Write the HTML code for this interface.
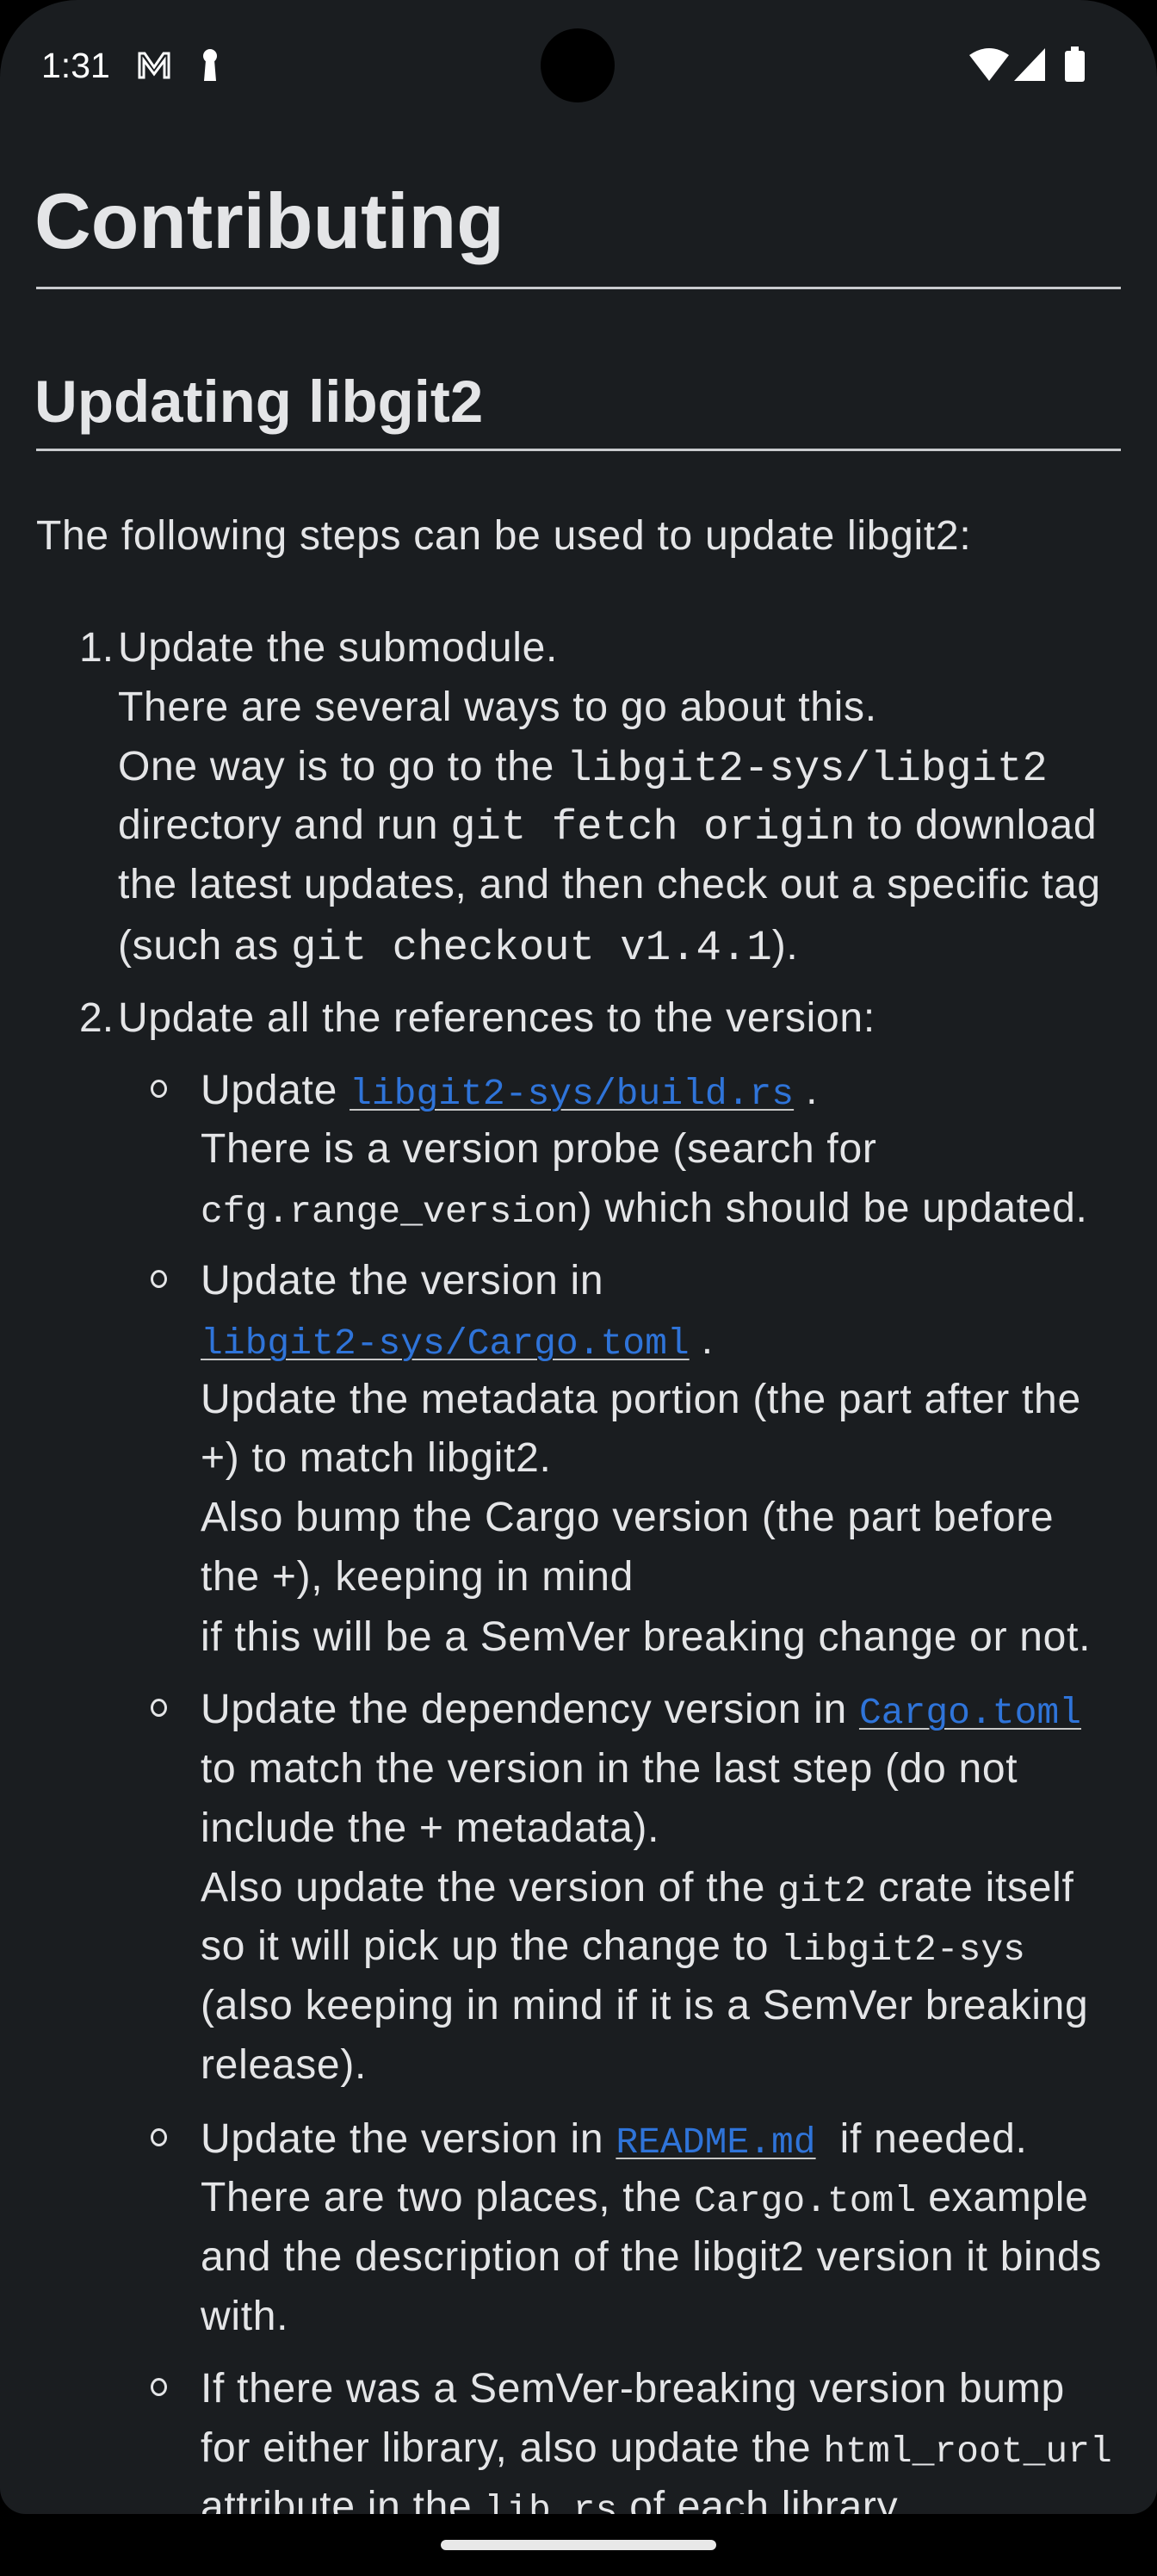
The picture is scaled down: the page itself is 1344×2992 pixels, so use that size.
<!DOCTYPE html>
<html><head><meta charset="utf-8"><style>
html,body{margin:0;padding:0;background:#000;}
#s{position:relative;width:1344px;height:2992px;overflow:hidden;background:#000;}
#scr{position:absolute;left:0;top:0;width:1344px;height:2920px;background:#1a1d20;border-radius:90px 90px 30px 30px;overflow:hidden;}
#in{position:absolute;left:0;top:4px;width:1344px;height:2920px;}
.l{position:absolute;white-space:pre;font-family:"Liberation Sans",sans-serif;font-size:48px;letter-spacing:0.7px;line-height:69px;color:#e4e5e7;}
.c{font-family:"Liberation Mono",monospace;font-size:43px;letter-spacing:0;}
.cb{font-family:"Liberation Mono",monospace;font-size:49px;letter-spacing:0;}
.a{font-family:"Liberation Mono",monospace;font-size:43px;letter-spacing:0;color:#2f74d9;text-decoration:underline;text-decoration-color:#c8c8c8;text-underline-offset:6px;text-decoration-thickness:2px;}
.b{position:absolute;left:175px;width:13px;height:15px;border:3px solid #e4e5e7;border-radius:50%;}
.hr{position:absolute;left:42px;width:1260px;height:3px;background:#c9cbce;}
</style></head><body><div id="s"><div id="scr">
<div style="position:absolute;left:48px;top:50px;font-family:'Liberation Sans',sans-serif;font-size:41px;color:#fff;line-height:52px;">1:31</div>
<svg style="position:absolute;left:158px;top:58px" width="42" height="36" viewBox="0 0 42 36"><path d="M4 32V4h6l11 16 11-16h6v28h-5V12L21 28 9 12v20z" fill="none" stroke="#fff" stroke-width="3"/></svg>
<svg style="position:absolute;left:232px;top:56px" width="24" height="40" viewBox="0 0 24 40"><circle cx="12" cy="9" r="8" fill="#fff"/><path d="M7 14h10l2 24H5z" fill="#fff"/></svg>
<div style="position:absolute;left:628px;top:33px;width:86px;height:86px;border-radius:50%;background:#000"></div>
<svg style="position:absolute;left:1126px;top:56px" width="46" height="38" viewBox="0 0 46 38"><path d="M0 8Q23-8 46 8L23 38z" fill="#fff"/></svg>
<svg style="position:absolute;left:1178px;top:56px" width="36" height="38" viewBox="0 0 36 38"><path d="M36 0V38H0z" fill="#fff"/></svg>
<div style="position:absolute;left:1237px;top:59px;width:23px;height:36px;background:#fff;border-radius:3px"></div>
<div style="position:absolute;left:1244px;top:54px;width:9px;height:6px;background:#fff"></div>

<div class="l" style="left:40px;top:198px;font-size:91px;letter-spacing:0;line-height:120px;font-weight:bold;">Contributing</div>
<div class="hr" style="top:333px"></div>
<div class="l" style="left:40px;top:422px;font-size:69px;letter-spacing:0;line-height:90px;font-weight:bold;">Updating libgit2</div>
<div class="hr" style="top:521px"></div>
<div id="in">
<div class="l" style="left:42px;top:584px">The following steps can be used to update libgit2:</div>

<div class="l" style="left:92px;top:714px;letter-spacing:0">1.</div>
<div class="l" style="left:137px;top:714px">Update the submodule.</div>
<div class="l" style="left:137px;top:783px">There are several ways to go about this.</div>
<div class="l" style="left:137px;top:852px">One way is to go to the <span class="cb">libgit2-sys/libgit2</span></div>
<div class="l" style="left:137px;top:920px">directory and run <span class="cb">git fetch origin</span> to download</div>
<div class="l" style="left:137px;top:989px">the latest updates, and then check out a specific tag</div>
<div class="l" style="left:137px;top:1060px">(such as <span class="cb">git checkout v1.4.1</span>).</div>
<div class="l" style="left:92px;top:1144px;letter-spacing:0">2.</div>
<div class="l" style="left:137px;top:1144px">Update all the references to the version:</div>

<div class="b" style="top:1250px"></div>
<div class="l" style="left:233px;top:1228px">Update <span class="a">libgit2-sys/build.rs</span> .</div>
<div class="l" style="left:233px;top:1296px">There is a version probe (search for</div>
<div class="l" style="left:233px;top:1365px"><span class="c">cfg.range_version</span>) which should be updated.</div>

<div class="b" style="top:1471px"></div>
<div class="l" style="left:233px;top:1449px">Update the version in</div>
<div class="l" style="left:233px;top:1518px"><span class="a">libgit2-sys/Cargo.toml</span> .</div>
<div class="l" style="left:233px;top:1587px">Update the metadata portion (the part after the</div>
<div class="l" style="left:233px;top:1655px">+) to match libgit2.</div>
<div class="l" style="left:233px;top:1724px">Also bump the Cargo version (the part before</div>
<div class="l" style="left:233px;top:1793px">the +), keeping in mind</div>
<div class="l" style="left:233px;top:1863px">if this will be a SemVer breaking change or not.</div>

<div class="b" style="top:1969px"></div>
<div class="l" style="left:233px;top:1947px">Update the dependency version in <span class="a">Cargo.toml</span></div>
<div class="l" style="left:233px;top:2016px">to match the version in the last step (do not</div>
<div class="l" style="left:233px;top:2085px">include the + metadata).</div>
<div class="l" style="left:233px;top:2154px">Also update the version of the <span class="c">git2</span> crate itself</div>
<div class="l" style="left:233px;top:2222px">so it will pick up the change to <span class="c">libgit2-sys</span></div>
<div class="l" style="left:233px;top:2291px">(also keeping in mind if it is a SemVer breaking</div>
<div class="l" style="left:233px;top:2360px">release).</div>

<div class="b" style="top:2468px"></div>
<div class="l" style="left:233px;top:2446px">Update the version in <span class="a">README.md</span>  if needed.</div>
<div class="l" style="left:233px;top:2514px">There are two places, the <span class="c">Cargo.toml</span> example</div>
<div class="l" style="left:233px;top:2583px">and the description of the libgit2 version it binds</div>
<div class="l" style="left:233px;top:2652px">with.</div>

<div class="b" style="top:2758px"></div>
<div class="l" style="left:233px;top:2736px">If there was a SemVer-breaking version bump</div>
<div class="l" style="left:233px;top:2805px">for either library, also update the <span class="c">html_root_url</span></div>
<div class="l" style="left:233px;top:2873px">attribute in the <span class="c">lib.rs</span> of each library.</div>
</div>
</div>
<div style="position:absolute;left:512px;top:2950px;width:320px;height:12px;border-radius:6px;background:#e8e8e8"></div>
</div></body></html>
